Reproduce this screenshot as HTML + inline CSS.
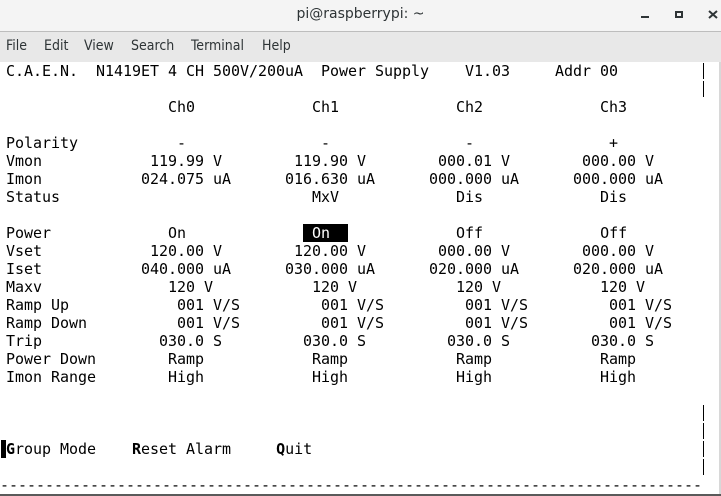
<!DOCTYPE html>
<html><head><meta charset="utf-8"><style>
*{margin:0;padding:0}
body{width:721px;height:496px;overflow:hidden;background:#fff;position:relative;font-family:"DejaVu Sans","Liberation Sans",sans-serif}
#tb{position:absolute;left:0;top:0;width:721px;height:31px;background:#f4f4f4;border-bottom:1px solid #bdbdbd}
#tb .t{position:absolute;left:0;width:721px;top:6px;text-align:center;font-size:14px;color:#2e3436}
#mb{position:absolute;left:0;top:32px;width:721px;height:30px;background:#e8e8e8}
#mb span{position:absolute;top:6px;font-size:14px;color:#2e3436;font-family:"DejaVu Sans Condensed","DejaVu Sans",sans-serif}
pre{position:absolute;left:6px;top:62px;font-family:"DejaVu Sans Mono","Liberation Mono",monospace;font-size:15px;line-height:18px;color:#000;letter-spacing:-0.03px}
.hl{background:#000;color:#fff}
.bar{position:absolute;left:703px;width:1px;height:16px;background:#000}
</style></head><body>
<div id="tb"><div class="t">pi@raspberrypi: ~</div>
<div style="position:absolute;left:641px;top:16px;width:8px;height:2px;background:#2e3436"></div>
<div style="position:absolute;left:675px;top:11px;width:4px;height:3px;border:2px solid #2e3436"></div>
<svg style="position:absolute;left:708px;top:10px" width="10" height="9"><path d="M1 1L9 8M9 1L1 8" stroke="#2e3436" stroke-width="2"/></svg>
</div>
<div id="mb"><span style="left:6px">File</span><span style="left:44px">Edit</span><span style="left:84px">View</span><span style="left:131px">Search</span><span style="left:191px">Terminal</span><span style="left:262px">Help</span></div>
<div style="position:absolute;left:1px;top:440px;width:5px;height:18px;background:#000"></div>
<div class="bar" style="top:63px"></div>
<div class="bar" style="top:81px"></div>
<div class="bar" style="top:405px"></div>
<div class="bar" style="top:423px"></div>
<div class="bar" style="top:441px"></div>
<div class="bar" style="top:459px"></div>
<pre>C.A.E.N.  N1419ET 4 CH 500V/200uA  Power Supply    V1.03     Addr 00

                  Ch0             Ch1             Ch2             Ch3

Polarity           -               -               -               +
Vmon            119.99 V        119.90 V        000.01 V        000.00 V
Imon           024.075 uA      016.630 uA      000.000 uA      000.000 uA
Status                            MxV             Dis             Dis

Power             On             <span class="hl"> On  </span>            Off             Off
Vset            120.00 V        120.00 V        000.00 V        000.00 V
Iset           040.000 uA      030.000 uA      020.000 uA      020.000 uA
Maxv              120 V           120 V           120 V           120 V
Ramp Up            001 V/S         001 V/S         001 V/S         001 V/S
Ramp Down          001 V/S         001 V/S         001 V/S         001 V/S
Trip             030.0 S         030.0 S         030.0 S         030.0 S
Power Down        Ramp            Ramp            Ramp            Ramp
Imon Range        High            High            High            High



<b>G</b>roup Mode    <b>R</b>eset Alarm     <b>Q</b>uit</pre>
<div style="position:absolute;left:0;top:476px;width:701px;height:18px;overflow:hidden"><pre style="left:0;top:0">--------------------------------------------------------------------------------</pre></div>
<div style="position:absolute;left:719px;top:62px;width:2px;height:434px;background:#d8d8d8"></div>
<div style="position:absolute;left:0;top:494px;width:721px;height:2px;background:#5a5a5a"></div>
</body></html>
